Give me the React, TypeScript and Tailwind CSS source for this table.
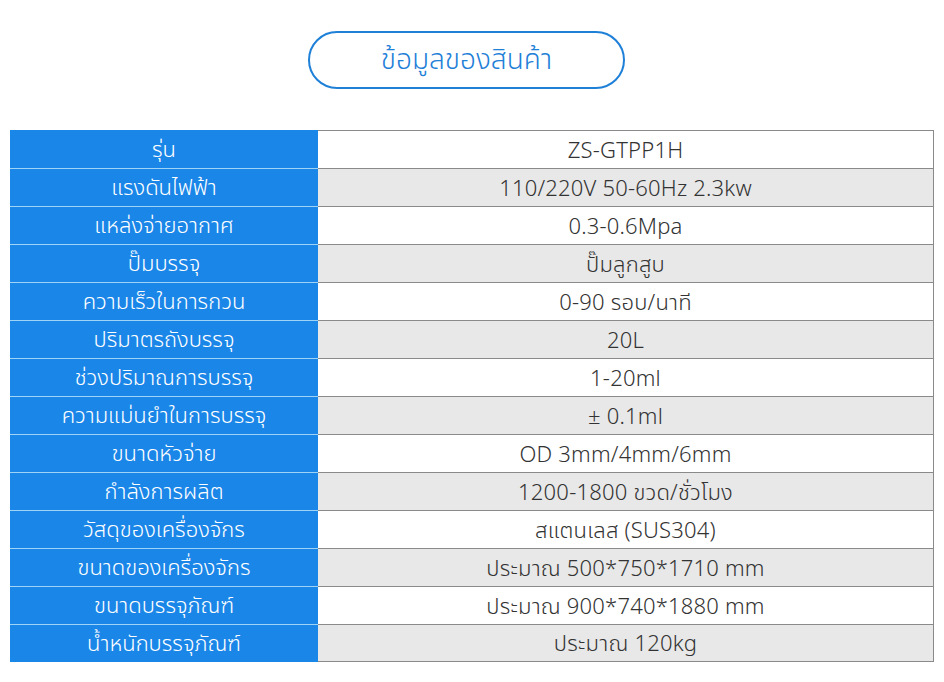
import React from "react";

const rows: [string, string][] = [
  ["รุ่น", "ZS-GTPP1H"],
  ["แรงดันไฟฟ้า", "110/220V 50-60Hz 2.3kw"],
  ["แหล่งจ่ายอากาศ", "0.3-0.6Mpa"],
  ["ปั๊มบรรจุ", "ปั๊มลูกสูบ"],
  ["ความเร็วในการกวน", "0-90 รอบ/นาที"],
  ["ปริมาตรถังบรรจุ", "20L"],
  ["ช่วงปริมาณการบรรจุ", "1-20ml"],
  ["ความแม่นยำในการบรรจุ", "± 0.1ml"],
  ["ขนาดหัวจ่าย", "OD 3mm/4mm/6mm"],
  ["กำลังการผลิต", "1200-1800 ขวด/ชั่วโมง"],
  ["วัสดุของเครื่องจักร", "สแตนเลส (SUS304)"],
  ["ขนาดของเครื่องจักร", "ประมาณ 500*750*1710 mm"],
  ["ขนาดบรรจุภัณฑ์", "ประมาณ 900*740*1880 mm"],
  ["น้ำหนักบรรจุภัณฑ์", "ประมาณ 120kg"],
];

export default function App() {
  return (
    <div
      className="w-[944px] h-[682px] bg-white overflow-hidden"
      style={{ fontFamily: '"Noto Sans Thai", "Noto Sans", sans-serif' }}
    >
      <div className="pt-[31px] pl-[308px]">
        <div className="w-[317px] h-[58px] rounded-full border-2 border-[#1f80d8] flex items-center justify-center text-[#1f80d8] text-[28px] font-light leading-none pt-[2px]">
          ข้อมูลของสินค้า
        </div>
      </div>
      <div className="mt-[41px] ml-[10px] w-[924px] flex flex-col">
        {rows.map(([k, v], i) => (
          <div key={i} className="flex h-[38px]">
            <div
              className={`w-[308px] bg-[#1a86e8] text-white text-[22px] font-light leading-none pt-[3px] flex items-center justify-center ${
                i === 0 ? "" : "border-t border-[#9fd3f7]"
              }`}
            >
              {k}
            </div>
            <div
              className={`flex-1 border-t border-r border-[#8a8a8a] ${
                i === rows.length - 1 ? "border-b" : ""
              } ${i % 2 === 1 ? "bg-[#e8e8e8]" : "bg-white"} text-[#333333] text-[22px] font-light leading-none pt-[4px] tracking-[0.2px] flex items-center justify-center`}
            >
              {v}
            </div>
          </div>
        ))}
      </div>
    </div>
  );
}
